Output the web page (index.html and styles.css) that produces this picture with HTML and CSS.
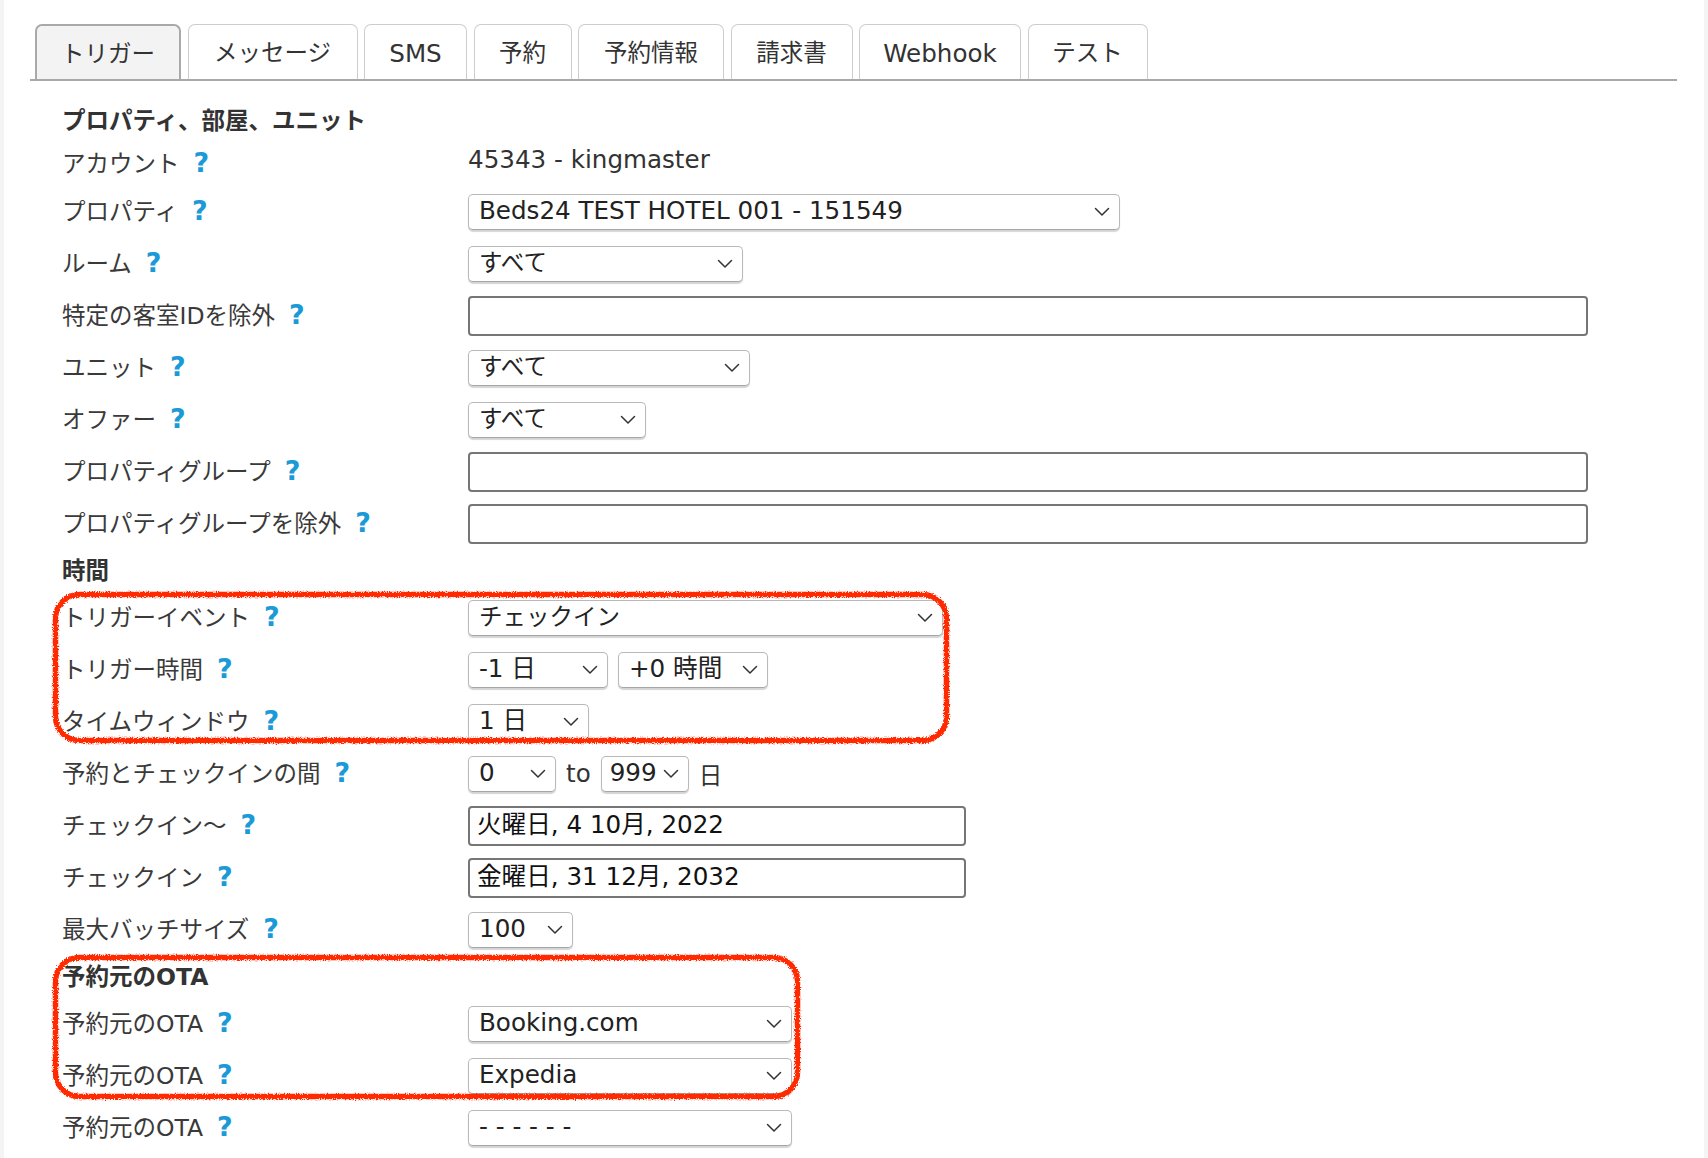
FILE: index.html
```html
<!DOCTYPE html>
<html lang="ja">
<head>
<meta charset="utf-8">
<title>トリガー</title>
<link rel="stylesheet" href="styles.css">
</head>
<body>
<div class="page">
  <nav class="tabs">
    <div class="tab active t1">トリガー</div>
    <div class="tab t2">メッセージ</div>
    <div class="tab t3 en">SMS</div>
    <div class="tab t4">予約</div>
    <div class="tab t5">予約情報</div>
    <div class="tab t6">請求書</div>
    <div class="tab t7 en">Webhook</div>
    <div class="tab t8">テスト</div>
  </nav>

  <div class="form">
    <div class="section">プロパティ、部屋、ユニット</div>

    <div class="row text">
      <div class="label">アカウント<span class="help">?</span></div>
      <div class="value en">45343 - kingmaster</div>
    </div>

    <div class="row">
      <div class="label">プロパティ<span class="help">?</span></div>
      <div class="ctrl">
        <div class="select w-prop en"><span>Beds24 TEST HOTEL 001 - 151549</span><svg class="chev" viewBox="0 0 16 10"><path d="M1.5 1.5 L8 8 L14.5 1.5"/></svg></div>
      </div>
    </div>

    <div class="row">
      <div class="label">ルーム<span class="help">?</span></div>
      <div class="ctrl">
        <div class="select w-room"><span>すべて</span><svg class="chev" viewBox="0 0 16 10"><path d="M1.5 1.5 L8 8 L14.5 1.5"/></svg></div>
      </div>
    </div>

    <div class="row">
      <div class="label">特定の客室IDを除外<span class="help">?</span></div>
      <div class="ctrl">
        <div class="input w-wide"></div>
      </div>
    </div>

    <div class="row">
      <div class="label">ユニット<span class="help">?</span></div>
      <div class="ctrl">
        <div class="select w-unit"><span>すべて</span><svg class="chev" viewBox="0 0 16 10"><path d="M1.5 1.5 L8 8 L14.5 1.5"/></svg></div>
      </div>
    </div>

    <div class="row">
      <div class="label">オファー<span class="help">?</span></div>
      <div class="ctrl">
        <div class="select w-offer"><span>すべて</span><svg class="chev" viewBox="0 0 16 10"><path d="M1.5 1.5 L8 8 L14.5 1.5"/></svg></div>
      </div>
    </div>

    <div class="row">
      <div class="label">プロパティグループ<span class="help">?</span></div>
      <div class="ctrl">
        <div class="input w-wide"></div>
      </div>
    </div>

    <div class="row">
      <div class="label">プロパティグループを除外<span class="help">?</span></div>
      <div class="ctrl">
        <div class="input w-wide"></div>
      </div>
    </div>

    <div class="section">時間</div>

    <div class="row">
      <div class="label">トリガーイベント<span class="help">?</span></div>
      <div class="ctrl">
        <div class="select w-event"><span>チェックイン</span><svg class="chev" viewBox="0 0 16 10"><path d="M1.5 1.5 L8 8 L14.5 1.5"/></svg></div>
      </div>
    </div>

    <div class="row">
      <div class="label">トリガー時間<span class="help">?</span></div>
      <div class="ctrl">
        <div class="select w-day en"><span>-1 日</span><svg class="chev" viewBox="0 0 16 10"><path d="M1.5 1.5 L8 8 L14.5 1.5"/></svg></div>
        <div class="select w-hour en"><span>+0 時間</span><svg class="chev" viewBox="0 0 16 10"><path d="M1.5 1.5 L8 8 L14.5 1.5"/></svg></div>
      </div>
    </div>

    <div class="row">
      <div class="label">タイムウィンドウ<span class="help">?</span></div>
      <div class="ctrl">
        <div class="select w-window en"><span>1 日</span><svg class="chev" viewBox="0 0 16 10"><path d="M1.5 1.5 L8 8 L14.5 1.5"/></svg></div>
      </div>
    </div>

    <div class="row">
      <div class="label">予約とチェックインの間<span class="help">?</span></div>
      <div class="ctrl">
        <div class="select w-num en"><span>0</span><svg class="chev" viewBox="0 0 16 10"><path d="M1.5 1.5 L8 8 L14.5 1.5"/></svg></div>
        <span class="plain en">to</span>
        <div class="select w-num tight en"><span>999</span><svg class="chev" viewBox="0 0 16 10"><path d="M1.5 1.5 L8 8 L14.5 1.5"/></svg></div>
        <span class="plain">日</span>
      </div>
    </div>

    <div class="row">
      <div class="label">チェックイン〜<span class="help">?</span></div>
      <div class="ctrl">
        <div class="input w-date date">火曜日, 4 10月, 2022</div>
      </div>
    </div>

    <div class="row">
      <div class="label">チェックイン<span class="help">?</span></div>
      <div class="ctrl">
        <div class="input w-date date">金曜日, 31 12月, 2032</div>
      </div>
    </div>

    <div class="row">
      <div class="label">最大バッチサイズ<span class="help">?</span></div>
      <div class="ctrl">
        <div class="select w-batch en"><span>100</span><svg class="chev" viewBox="0 0 16 10"><path d="M1.5 1.5 L8 8 L14.5 1.5"/></svg></div>
      </div>
    </div>

    <div class="section">予約元のOTA</div>

    <div class="row">
      <div class="label">予約元のOTA<span class="help">?</span></div>
      <div class="ctrl">
        <div class="select w-ota en"><span>Booking.com</span><svg class="chev" viewBox="0 0 16 10"><path d="M1.5 1.5 L8 8 L14.5 1.5"/></svg></div>
      </div>
    </div>

    <div class="row">
      <div class="label">予約元のOTA<span class="help">?</span></div>
      <div class="ctrl">
        <div class="select w-ota en"><span>Expedia</span><svg class="chev" viewBox="0 0 16 10"><path d="M1.5 1.5 L8 8 L14.5 1.5"/></svg></div>
      </div>
    </div>

    <div class="row">
      <div class="label">予約元のOTA<span class="help">?</span></div>
      <div class="ctrl">
        <div class="select w-ota en"><span>- - - - - -</span><svg class="chev" viewBox="0 0 16 10"><path d="M1.5 1.5 L8 8 L14.5 1.5"/></svg></div>
      </div>
    </div>
  </div>

  <svg class="mark mark-1" viewBox="0 0 898 153">
    <defs>
      <filter id="rough" x="-5%" y="-5%" width="110%" height="110%">
        <feTurbulence type="fractalNoise" baseFrequency="0.9" numOctaves="2" seed="3" result="noise"/>
        <feDisplacementMap in="SourceGraphic" in2="noise" scale="4.5" xChannelSelector="R" yChannelSelector="G"/>
      </filter>
    </defs>
    <rect x="3.5" y="3.5" width="891" height="146" rx="24" ry="24" filter="url(#rough)"/>
  </svg>
  <svg class="mark mark-2" viewBox="0 0 749 146">
    <rect x="3.5" y="3.5" width="742" height="139" rx="24" ry="24" filter="url(#rough)"/>
  </svg>
</div>
</body>
</html>
```

FILE: styles.css
```css
html, body {
  margin: 0;
  padding: 0;
}

body {
  background: #f4f4f4;
  font-family: "DejaVu Sans", "Noto Sans CJK JP", sans-serif;
  font-size: 23.5px;
  color: #333;
}

.page {
  position: relative;
  margin: 0 4px;
  height: 1158px;
  padding-top: 24px;
  box-sizing: border-box;
  background: #fff;
  overflow: hidden;
}

.en {
  font-size: 24.6px;
}

/* Tabs */
.tabs {
  display: flex;
  gap: 6.5px;
  margin-left: 26px;
  width: 1647px;
  padding-left: 5px;
  box-sizing: border-box;
  border-bottom: 2px solid #a9a9a9;
}

.tab {
  height: 55px;
  padding-top: 4px;
  box-sizing: border-box;
  border: 1.5px solid #cdcdcd;
  border-bottom: none;
  border-radius: 7px 7px 0 0;
  background: #fff;
  display: flex;
  align-items: center;
  justify-content: center;
  white-space: nowrap;
  line-height: 1;
  color: #333;
}

.tab.active {
  background: #f3f3f3;
  border: 2px solid #a9a9a9;
  border-bottom: none;
}

.t1 { width: 146px; }
.t2 { width: 170px; }
.t3 { width: 103px; }
.t4 { width: 98px; }
.t5 { width: 146px; }
.t6 { width: 122px; }
.t7 { width: 162px; }
.t8 { width: 120px; }

/* Form */
.form {
  margin-top: 17px;
  padding-left: 58px;
}

.section {
  height: 42px;
  display: flex;
  align-items: center;
  font-weight: bold;
  color: #333;
}

.row {
  height: 52px;
  display: flex;
  align-items: center;
}

.row.text {
  height: 44px;
}

.label {
  width: 406px;
  flex: none;
  white-space: nowrap;
  display: flex;
  align-items: center;
  color: #3a3a3a;
}

.help {
  color: #1b9ad7;
  font-family: "DejaVu Sans", sans-serif;
  font-weight: bold;
  font-size: 27px;
  line-height: 1;
  margin-left: 14px;
}

.value {
  color: #333;
  margin-top: -6px;
}

.ctrl {
  display: flex;
  align-items: center;
  gap: 10px;
  margin-top: 3px;
}

.select {
  height: 36px;
  box-sizing: border-box;
  border: 1.5px solid #b9b9b9;
  border-bottom-color: #a6a6a6;
  border-radius: 5px;
  box-shadow: 0 2px 1px rgba(0, 0, 0, 0.17);
  background: #fff;
  display: flex;
  align-items: center;
  justify-content: space-between;
  padding: 0 9px 0 10px;
  color: #222;
  white-space: nowrap;
  line-height: 1;
}

.select.tight {
  padding-left: 8px;
}

.chev {
  width: 16px;
  height: 10px;
  flex: none;
  margin-left: 6px;
}

.chev path {
  fill: none;
  stroke: #333;
  stroke-width: 1.5;
  stroke-linecap: round;
  stroke-linejoin: round;
}

.input {
  height: 40px;
  box-sizing: border-box;
  border: 2px solid #767676;
  border-radius: 4px;
  background: #fff;
  display: flex;
  align-items: center;
  padding: 0 7px;
  color: #111;
  white-space: nowrap;
  line-height: 1;
}

.input.date {
  font-size: 24.6px;
}

.plain {
  color: #333;
}

.w-prop { width: 652px; }
.w-room { width: 275px; }
.w-unit { width: 282px; }
.w-offer { width: 178px; }
.w-event { width: 475px; }
.w-day { width: 140px; }
.w-hour { width: 150px; }
.w-window { width: 121px; }
.w-num { width: 88px; }
.w-batch { width: 105px; }
.w-ota { width: 324px; }
.w-wide { width: 1120px; }
.w-date { width: 498px; }

/* Hand-drawn annotation marks */
.mark {
  position: absolute;
  pointer-events: none;
  overflow: visible;
}

.mark rect {
  fill: none;
  stroke: #ff2a00;
  stroke-width: 5.5;
}

.mark-1 {
  left: 48px;
  top: 591px;
  width: 898px;
  height: 153px;
}

.mark-2 {
  left: 48px;
  top: 954px;
  width: 749px;
  height: 146px;
}
```
